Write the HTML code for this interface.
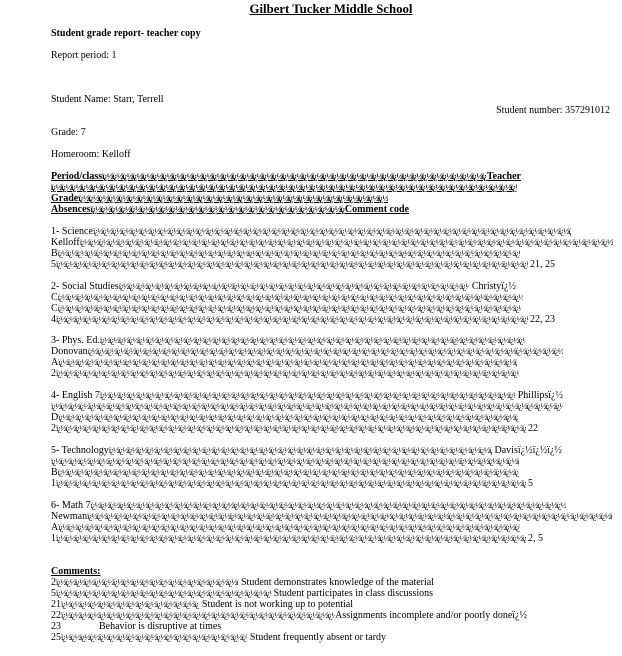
<!DOCTYPE html>
<html><head><meta charset="utf-8"><style>
body{margin:0;background:#fff;width:622px;height:656px;position:relative;overflow:hidden;font-family:"Liberation Serif",serif;font-size:10px;color:#000}
.l{position:absolute;left:51px;display:flex;white-space:nowrap;line-height:11px;height:11px}
.m{flex:1;overflow:hidden;white-space:nowrap;font-size:8.5px;letter-spacing:-1px;line-height:11px}
.b{font-weight:bold;text-decoration:underline}
.p{position:absolute;white-space:nowrap;line-height:11px}
</style></head><body>
<div class="p" style="left:0;width:662px;text-align:center;top:1px;font-size:12.8px;font-weight:bold;text-decoration:underline;line-height:17px">Gilbert Tucker Middle School</div>
<div class="p" style="left:51px;top:28px;font-weight:bold">Student grade report- teacher copy</div>
<div class="p" style="left:51px;top:50px">Report period: 1</div>
<div class="p" style="left:51px;top:94px">Student Name: Starr, Terrell</div>
<div class="p" style="right:12px;top:105px">Student number: 357291012</div>
<div class="p" style="left:51px;top:127px">Grade: 7</div>
<div class="p" style="left:51px;top:149px">Homeroom: Kelloff</div>
<div id="c"></div>
<div class="p" style="left:51px;top:566px" ><span class="b">Comments:</span></div>
<div class="p" style="left:51px;top:621px">23</div>
<div class="p" style="left:99px;top:621px">Behavior is disruptive at times</div>
<script>
var U="ï¿½".repeat(60);
var L=[
[171,"<b><u>Period/class</u></b>","<b><u> Teacher</u></b>",521,1],
[182,"","",517,1],
[193,"<b><u>Grade</u></b>","",388,1],
[204,"<b><u>Absences</u></b>","<b><u> Comment code</u></b>",409,1],
[226,"1- Science","",571],[237,"Kelloff","",613],[248,"B","",520],[259,"5","&nbsp;21, 25",555],
[281,"2- Social Studies","&nbsp;Christyï¿½",516],[292,"C","",523],[303,"C","",521],[314,"4","&nbsp;22, 23",555],
[335,"3- Phys. Ed.","",525],[346,"Donovan","",563],[357,"A","",517],[368,"2","",519],
[390,"4- English 7","&nbsp;Phillipsï¿½",563],[401,"","",563],[412,"D","",518],[423,"2","&nbsp;22",538],
[445,"5- Technology","&nbsp;Davisï¿½ï¿½ï¿½",562],[456,"","",519],[467,"B","",519],[478,"1","&nbsp;5",533],
[500,"6- Math 7","",566],[511,"Newman","",612],[522,"A","",520],[533,"1","&nbsp;2, 5",543],
[577,"2","&nbsp;Student demonstrates knowledge of the material",434],
[588,"5","&nbsp;Student participates in class discussions",433],
[599,"21","&nbsp;Student is not working up to potential",353],
[610,"22","Assignments incomplete and/or poorly doneï¿½",527],
[632,"25","&nbsp;Student frequently absent or tardy",386]];
var h="";
L.forEach(function(a){
var u=a[4]?' style="font-weight:bold;text-decoration:underline"':'';
h+='<div class="l" style="top:'+a[0]+'px;width:'+(a[3]-51)+'px"><span>'+a[1]+'</span><span class="m"'+u+'>'+U+'</span><span>'+a[2]+'</span></div>';});
document.getElementById("c").innerHTML=h;
</script>
</body></html>
